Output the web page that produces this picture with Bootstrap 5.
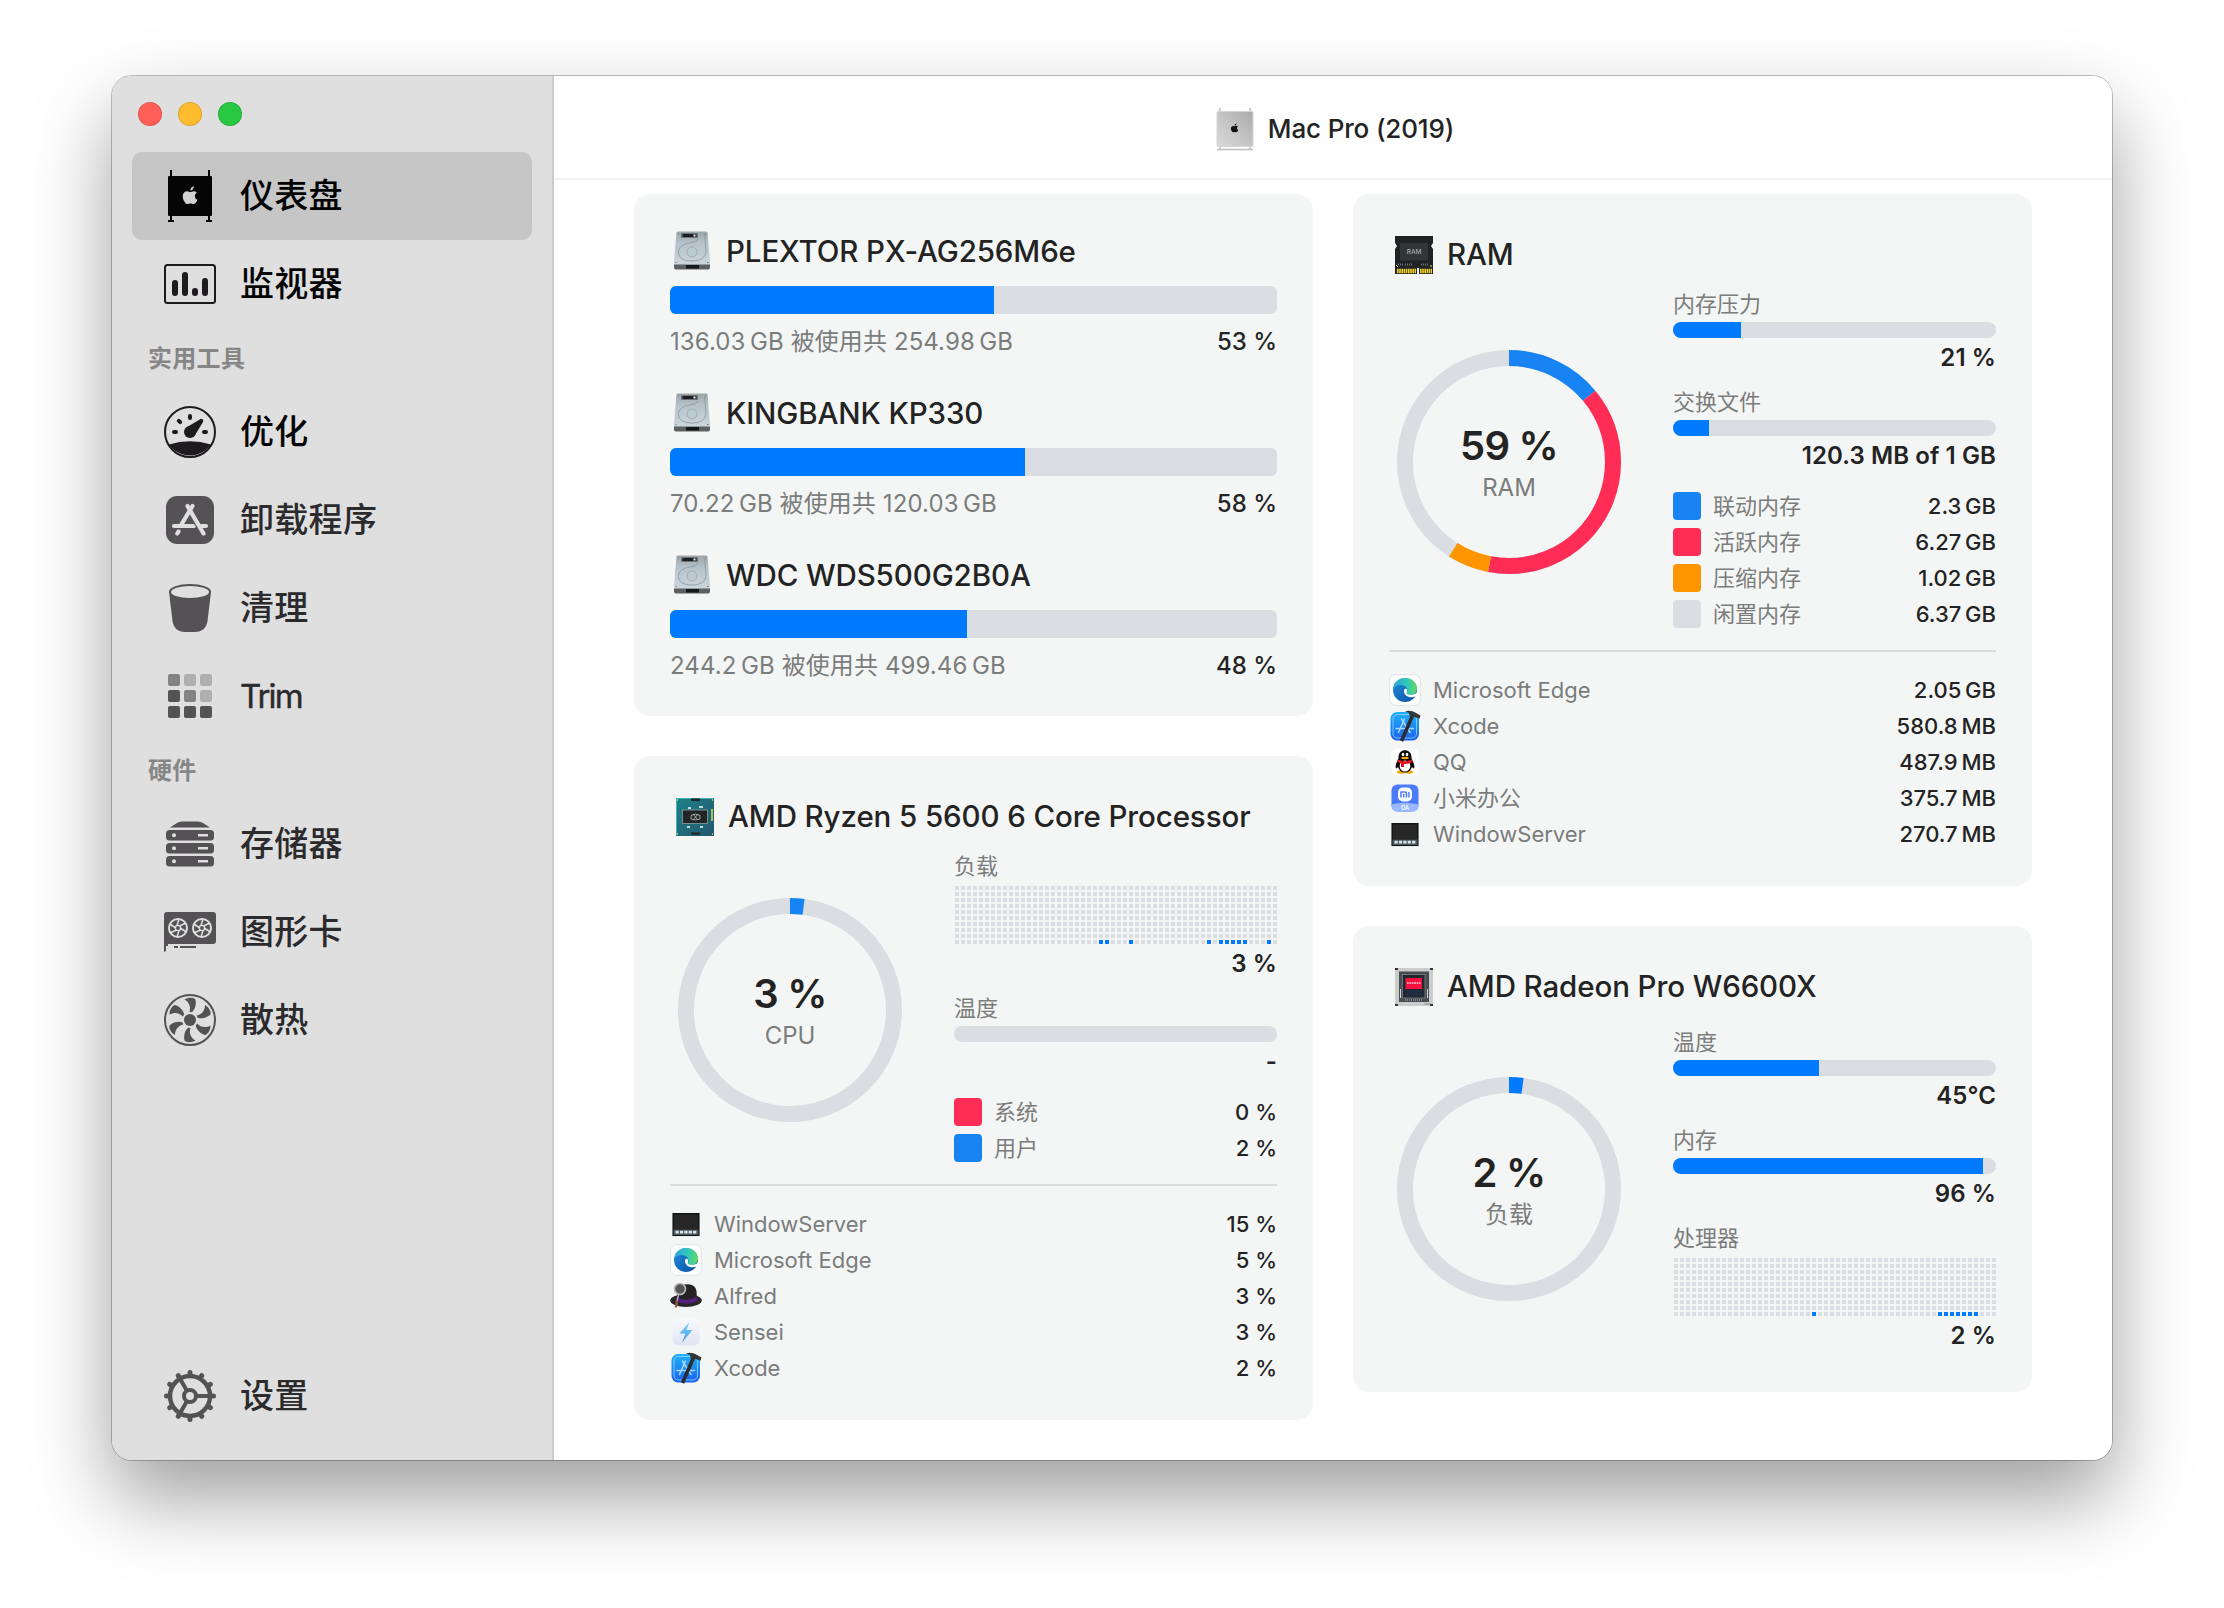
<!DOCTYPE html>
<html lang="zh-CN">
<head>
<meta charset="utf-8">
<title>Mac Pro (2019)</title>
<link href="https://cdn.jsdelivr.net/npm/bootstrap@5.3.0/dist/css/bootstrap.min.css" rel="stylesheet">
<style>
body{font-family:Inter,"Noto Sans CJK SC",sans-serif;width:2224px;height:1608px;overflow:hidden;color:#232323;padding:76px 112px 0}
.win{width:2000px;height:1384px;border-radius:20px;box-shadow:0 0 0 1px rgba(0,0,0,.24),0 38px 80px rgba(0,0,0,.38)}
.side{width:442px;background:#dfdfdf;border-right:2px solid #cbcbcb;padding:26px 20px 20px}
.lights{height:50px;padding-left:6px;gap:16px}
.dot{width:24px;height:24px;border-radius:50%;border:1px solid rgba(0,0,0,.12)}
.dot.close-dot{background:#ff5f57}
.dot.min-dot{background:#febc2e}
.dot.max-dot{background:#28c840}
.side .nav-link{height:88px;padding:0 0 0 32px;gap:24px;font-size:34px;font-weight:500;line-height:1;color:#2b2a2c;border-radius:10px;width:400px;letter-spacing:.3px}
.side .nav-link.dark{color:#050505}
.side .nav-link.active{background:#c6c6c6;color:#000}
.side .nav-link svg{width:52px;height:52px;flex:none;color:#545255}
.side .dark svg{color:#1d1b1e}
.side .latin{font-size:33px;font-weight:400;letter-spacing:-1.9px;-webkit-text-stroke:.4px}
.nav-label{height:60px;padding:2px 0 0 16px;font-size:24px;font-weight:700;color:#868686;letter-spacing:.3px}
.topbar{height:104px;border-bottom:2px solid #f2f2f2;background:#fefefe;font-size:26px;font-weight:500;gap:14px;padding:3px 0 0 4px;letter-spacing:-.15px}
.board{padding:14px 80px 0;gap:40px}
.stack{width:679px;gap:40px}
.tile{background:#f4f6f5;border:0;border-radius:16px;padding:41px 36px 0;color:#232323}
.tile .ttl{height:40px;padding-left:6px;font-size:29.5px;font-weight:500;gap:14px;white-space:nowrap;letter-spacing:-.1px;line-height:38px}
.tile .ttl svg{width:38px;height:40px;flex:none}
.tile .ttl span{margin-top:-2px}
.progress{--bs-progress-height:16px;--bs-progress-bg:#dadde2;--bs-progress-bar-bg:#007aff;border-radius:8px}
.tile-drives{height:522px;padding-top:37px}
.tile-cpu{height:664px}
.tile-ram{height:692px}
.tile-gpu{height:466px}
.drive{height:162px}
.drive:first-child{height:163px}
.drive .ttl{padding-left:3px;gap:15px}
.drive .ttl span{margin-top:0}
.drive .progress{height:28px;border-radius:6px;margin-top:15px}
.drive .info{margin-top:14px;height:28px;font-size:24px}
.drive .info .mute{letter-spacing:.1px}
.mute{color:#7b7c7c}
.drive .info .val{font-weight:500;font-size:24px}
.gauges{margin-top:15px}
.tile-gpu .gauges{margin-top:21px}
.ring{width:224px;height:224px;margin:46px 0 0 8px;flex:none}
.tile-ram .ring{margin-top:60px}
.tile-gpu .ring{margin-top:49px}
.ring svg{width:224px;height:224px}
.ring .inner{padding:3px 0 0}
.ring .num{font-size:40px;font-weight:600;line-height:48px;letter-spacing:-.8px}
.ring .cap{font-size:24px;line-height:36px}
.metrics{width:323px}
.metric{height:98px}
.metric.tall{height:142px}
.metric .lab{height:28px;line-height:28px;font-size:22px}
.metric .progress{margin-top:4px}
.metric .dots{display:block;margin-top:6px;width:323px;height:58px}
.metric .val{margin-top:6px;height:28px;line-height:28px;font-size:24px;font-weight:600;text-align:right;letter-spacing:.1px}
.keys{padding-top:6px}
.key{height:28px;margin-bottom:8px;font-size:22px}
.key:last-child{margin-bottom:0}
.key .sw{width:28px;height:28px;border-radius:4px;margin-right:12px}
.sw-blue{background:#1884f3}
.sw-red{background:#ff2d55}
.sw-orange{background:#ff9500}
.sw-grey{background:#dadde2}
.key .val,.proc .val{font-weight:500;font-size:22px}
.rule{height:2px;background:#dadddc;margin:22px 0 20px}
.proc{height:36px;font-size:22px}
.proc svg{width:32px;height:32px;margin-right:12px;overflow:visible}
</style>
<script src="https://cdn.jsdelivr.net/npm/bootstrap@5.3.0/dist/js/bootstrap.bundle.min.js"></script>
</head>
<body class="bg-white">
<svg width="0" height="0" class="position-absolute">
<defs>
<linearGradient id="gHdd" x2="0" y2="1"><stop stop-color="#9ba4a9"/><stop offset=".35" stop-color="#b6c2c9"/><stop offset="1" stop-color="#cbd6dc"/></linearGradient>
<linearGradient id="gMac" x1="1" x2="0" y2="1"><stop stop-color="#a9a9a9"/><stop offset=".5" stop-color="#c4c4c4"/><stop offset="1" stop-color="#d9d9d9"/></linearGradient>
<linearGradient id="gE1" x2="1"><stop stop-color="#2aa7e0"/><stop offset=".6" stop-color="#35c8b5"/><stop offset="1" stop-color="#62dc5e"/></linearGradient>
<linearGradient id="gE2" x2="1" y2="1"><stop stop-color="#1f8fdd"/><stop offset="1" stop-color="#0c4fa0"/></linearGradient>
<linearGradient id="gX" x2="0" y2="1"><stop stop-color="#1fb2f8"/><stop offset="1" stop-color="#1a62ee"/></linearGradient>
<linearGradient id="gS" x2="0" y2="1"><stop stop-color="#f8f9fe"/><stop offset="1" stop-color="#e0e3f3"/></linearGradient>
<linearGradient id="gB" x2="0" y2="1"><stop stop-color="#7ed8f6"/><stop offset="1" stop-color="#3e95ee"/></linearGradient>
<linearGradient id="gCpu" x2="1" y2="1"><stop stop-color="#1d8189"/><stop offset="1" stop-color="#24566c"/></linearGradient>
<pattern id="cells" width="6" height="6" patternUnits="userSpaceOnUse" x="1"><rect width="4" height="4" fill="#dadde2"/></pattern>
<path id="blade" d="M-5.500-20.500C-1.500-23 4-22.500 5.500-20.500C6.800-14.500 4.200-9.500 1.800-7.800L-.5-8C1.200-13-1-18-5.500-20.500Z"/>
<path id="fruit" d="M14.800 7.200c-1.300.8-2 2-1.900 3.500.1 1.700 1 2.900 2.500 3.500-.8 2.300-2.300 4.400-3.900 4.400-1.100 0-1.600-.7-3-.7s-2 .7-3 .7C3.400 18.600.8 14.500.8 11c0-3.400 2.200-5.200 4.400-5.200 1.300 0 2.300.8 3.200.8.900 0 2.100-.9 3.700-.9 1.100 0 2.100.6 2.700 1.500zM8.300 5.300C8.200 3.200 9.900 1.100 11.800.8c.2 2.200-1.500 4.400-3.500 4.500z"/>
<symbol id="i-mac" viewBox="0 0 52 52"><path d="M6 0h2v6h-2zM44 0h2v6h-2zM6 46h2v4h2v2H4v-2h2zM44 46h2v4h2v2h-6v-2h2z"/><rect x="4" y="6" width="44" height="40" rx="1" fill="#050505"/><use href="#fruit" x="18" y="15.500" fill="#d2d2d2"/></symbol>
<symbol id="i-mon" viewBox="0 0 52 52"><rect x="1" y="7" width="50" height="38" rx="2.500" fill="none" stroke="currentColor" stroke-width="2"/><path fill="none" stroke="currentColor" stroke-width="6" stroke-linecap="round" d="M11 25v10M21 17v18M31 33v2M41 23v12"/></symbol>
<symbol id="i-opt" viewBox="0 0 52 52"><circle cx="26" cy="26" r="25" fill="none" stroke="currentColor" stroke-width="2"/><path fill="currentColor" d="M5 38.500Q26 32 47 38.500A25.500 25.500 0 0 1 5 38.500zM21.500 22L37 12.800Q40 13 39 16L30.500 30z"/><circle cx="26" cy="26" r="6" fill="currentColor"/><path fill="none" stroke="currentColor" stroke-width="4" stroke-linecap="round" d="M26 10v2M10 26h2M40 26h2M14.800 14.800l1.400 1.400"/></symbol>
<symbol id="i-app" viewBox="0 0 52 52"><rect x="2" y="2" width="48" height="48" rx="11" fill="currentColor"/><path fill="none" stroke="#dfdfdf" stroke-width="4.200" stroke-linecap="round" d="M28.500 12L16.500 32M23.500 12L39.500 39.500M10 32h20M37 32h5M14.500 37.500l-1.200 2"/><path d="M26.500 23.500l5.500 9" stroke="#545255" stroke-width="1"/></symbol>
<symbol id="i-bin" viewBox="0 0 52 52"><path fill="currentColor" d="M5 10C5 1.500 47 1.500 47 10L43.500 39C42.500 46 38 50 31 50H21C14 50 9.500 46 8.500 39z"/><path fill="currentColor" d="M5 10a21 8 0 0 1 42 0z"/><ellipse cx="26" cy="10" rx="19" ry="6" fill="#dfdfdf"/></symbol>
<symbol id="i-trim" viewBox="0 0 52 52"><g fill="#828183"><rect x="4" y="4" width="12" height="12" rx="2"/><rect x="20" y="20" width="12" height="12" rx="2"/></g><g fill="#b0aeb1"><rect x="20" y="4" width="12" height="12" rx="2"/><rect x="36" y="4" width="12" height="12" rx="2"/><rect x="36" y="20" width="12" height="12" rx="2"/></g><g fill="#545255"><rect x="4" y="20" width="12" height="12" rx="2"/><rect x="4" y="36" width="12" height="12" rx="2"/><rect x="20" y="36" width="12" height="12" rx="2"/><rect x="36" y="36" width="12" height="12" rx="2"/></g></symbol>
<symbol id="i-sto" viewBox="0 0 52 52"><path fill="currentColor" d="M6 9.500L13 5Q15 3.500 18 3.500H34Q37 3.500 39 5L46 9.500z"/><g fill="currentColor"><rect x="2" y="12" width="48" height="10.500" rx="3.500"/><rect x="2" y="25" width="48" height="10.500" rx="3.500"/><rect x="2" y="38" width="48" height="10.500" rx="3.500"/></g><g fill="#dfdfdf"><circle cx="10" cy="17.200" r="2"/><circle cx="10" cy="30.200" r="2"/><circle cx="10" cy="43.200" r="2"/><path d="M34 16h10v2.600H34zM34 29h10v2.600H34zM34 42h10v2.600H34z"/></g></symbol>
<symbol id="i-fan" viewBox="-26 -26 52 52"><circle r="25" fill="none" stroke="currentColor" stroke-width="2"/><circle r="6" fill="currentColor"/><g fill="currentColor"><use href="#blade"/><use href="#blade" transform="rotate(60)"/><use href="#blade" transform="rotate(120)"/><use href="#blade" transform="rotate(180)"/><use href="#blade" transform="rotate(240)"/><use href="#blade" transform="rotate(300)"/></g></symbol>
<symbol id="i-rot" viewBox="-10 -10 20 20"><circle r="9" fill="none" stroke="#dfdfdf" stroke-width="2"/><circle r="2.600" fill="none" stroke="#dfdfdf" stroke-width="1.400"/><path fill="none" stroke="#dfdfdf" stroke-width="1.500" d="M-1-2.500L1-9M2-2.200L8-5M2.800.5L8.500 4M1 2.500L-1 9M-2 2.200L-8 5M-2.800-.5L-8.500-4"/></symbol>
<symbol id="i-gpu" viewBox="0 0 52 52"><path fill="currentColor" d="M0 9Q0 6 3 6H49Q52 6 52 9V35Q52 38 49 38H4V40H2V45L0 46zM10 40h4v2h-4zM16 40h16v2H16z"/><use href="#i-rot" x="4" y="12" width="20" height="20"/><use href="#i-rot" x="28" y="12" width="20" height="20"/></symbol>
<symbol id="i-set" viewBox="-26 -26 52 52"><circle r="20" fill="none" stroke="currentColor" stroke-width="4.500"/><circle r="6" fill="none" stroke="currentColor" stroke-width="4"/><path stroke="currentColor" stroke-width="4" d="M7 0H20M-3.500-6L-10-17.300M-3.500 6L-10 17.300"/><path stroke="currentColor" stroke-width="5" stroke-linecap="round" d="M0-23.500V-21M0 23.500V21M-23.500 0H-21M23.500 0H21M11.700-20.300L10.500-18.200M20.300-11.700L18.200-10.500M20.300 11.700L18.200 10.500M11.700 20.300L10.500 18.200M-11.700 20.300L-10.500 18.200M-20.300 11.700L-18.200 10.500M-20.300-11.700L-18.200-10.500M-11.700-20.300L-10.500-18.200"/></symbol>
<symbol id="i-pro" viewBox="0 0 38 44"><path fill="none" stroke="#bdbdbd" stroke-width="1.500" d="M4 1v4M34 1v4M4 38v4M34 38v4M1 42.500h36"/><rect x="1" y="4.500" width="36" height="35" rx="1.500" fill="url(#gMac)" stroke="#d5d5d5"/><use href="#fruit" transform="translate(14.500 16) scale(.5)" fill="#111"/></symbol>
<symbol id="i-hdd" viewBox="0 0 38 40"><path d="M1 33h36v3.500q0 2-2 2H3q-2 0-2-2z" fill="#5a6064"/><path d="M13 34h13v3.500H13z" fill="#15181a"/><path d="M3.500 1.500Q3.600.5 5 .5H33q1.400 0 1.500 1L37 30v3.500H1V30z" fill="url(#gHdd)"/><path d="M8 2h17v5H8z" fill="#6d757a"/><path d="M9.500 3h14v3h-14z" fill="#1d2022"/><path d="M20.500 3.500h2v2h-2z" fill="#eee"/><path d="M25 8q-1 3-8 4c-7 1-11.500 4-11.500 9.500S11 30 19 30c9 0 14-4 14-10l-1.500-17" fill="none" stroke="#8b989f" stroke-width=".9"/><circle cx="19" cy="21" r="5" fill="#bccad1" stroke="#98a5ad" stroke-width=".8"/><path d="M2.500 31.500h1M34 31.500h1.500M5 3h1M32 3h1" stroke="#6b767c"/></symbol>
<symbol id="i-cpu" viewBox="0 0 38 40"><rect y="1" width="38" height="38" fill="url(#gCpu)"/><path d="M.5 38.500V1.500H37.500" fill="none" stroke="#3fb3b5"/><path d="M15 1.500h9v2.500h-9zM15 35.500h9v2h-9z" fill="#1a2429"/><rect x="6.500" y="13" width="25" height="13.500" fill="#222527" stroke="#8fa1a3" stroke-width=".8"/><path d="M15 18.500q4-3 9 0v3.500q-5 2-9 0zM17 17l4.500 5.500M22 17l-4.500 5.500" fill="none" stroke="#b8c3c4" stroke-width=".8"/><path d="M12 10h3v2h-3zM23 9h4v2h-4zM11 29h3v2h-3zM24 29h3v2h-3z" fill="#bdd7d6"/><path d="M36 12v12M1 3h1M36 3h1M1 37h1M36 37h1" stroke="#d7e04a" stroke-width="1.500"/></symbol>
<symbol id="i-ram" viewBox="0 0 38 40"><path d="M0 1h38v7l-2 3 2 3v25H24v-6h-2v6H0V14l2-3-2-3z" fill="#202224"/><rect x="5" y="8" width="28" height="17.500" fill="#333638"/><text x="19" y="19" text-anchor="middle" font-size="6.500" font-family="Inter" fill="#a7a7a7">RAM</text><path d="M3 29.500h5M10 29.500h7M26 29.500h7" stroke="#777" stroke-dasharray="1 1" stroke-width="2"/><path d="M2 36h19M25 36h12" stroke="#f3d32b" stroke-width="4.500" stroke-dasharray="1.600 .6"/><path d="M1 30l2 2M35 31h2" stroke="#eadb9a"/></symbol>
<symbol id="i-chip" viewBox="0 0 38 40"><rect y="1" width="38" height="38" rx="1" fill="#cbcccc"/><path d="M0 1h3v2H0zM35 1h3v2h-3zM0 37h3v2H0zM35 37h3v2h-3z" fill="#333"/><rect x="4" y="4.500" width="30" height="30.500" fill="#484d51"/><rect x="7.500" y="7.500" width="22.500" height="23.500" fill="#22272d" stroke="#7b868d" stroke-width=".8"/><rect x="10.500" y="11" width="16.500" height="11" fill="#f5103e"/><path d="M12 16h13.500" stroke="#ffc7d1" stroke-width="1.500" stroke-dasharray="1.800 .6"/><rect x="10.500" y="23" width="16.500" height="6" fill="#202c40"/><path d="M10 33h18" stroke="#bbb" stroke-dasharray="1 1"/><path d="M5.500 22v9M32.500 22v9" stroke="#d5d5d5"/><path d="M29 37h7" stroke="#888"/></symbol>
<symbol id="a-win" viewBox="0 0 32 32"><rect x="2" y="5" width="28" height="23.500" fill="#c9e2e6"/><rect x="2.500" y="5" width="27" height="23" fill="#151515"/><rect x="4" y="6.500" width="24" height="14.500" fill="#272727"/><rect x="3.500" y="21.500" width="25" height="5.500" fill="#4d565c"/><path d="M5.500 24.200h21.500" stroke="#d3e7f2" stroke-width="2.800" stroke-dasharray="3.200 1.200"/></symbol>
<symbol id="a-edge" viewBox="0 0 32 32"><rect x=".7" y=".7" width="30.600" height="30.600" rx="6" fill="#fff" stroke="#e2e3e3"/><circle cx="16" cy="16" r="12" fill="url(#gE2)"/><path d="M4.200 15C5 8 10 4 16 4c7 0 12 5 12 10.500 0 4.500-3.500 6.500-7 6.500-2.500 0-3.500-1-3-2 1-2.500.5-5.500-3-7.300C11 10 6.500 11.500 4.200 15z" fill="url(#gE1)"/><path d="M16 14.500c-1.500 1.800-1.300 5 1 7 2.800 2.300 6.500 2.200 9.500.8l2.500-1.500-1-2.500c-2 2.700-7 3.200-9.500 2C17 19.500 18.500 17.500 18 15.500z" fill="#fff"/></symbol>
<symbol id="a-alf" viewBox="0 0 32 32"><ellipse cx="16" cy="20.500" rx="15.800" ry="6.500" fill="#29262a"/><path d="M7 20V9Q9 3.500 15 4.500Q25 3 26.500 11L27 20Q17 26 7 20z" fill="#252325"/><path d="M6.500 17q10 6 20.500-.5l.5 4Q17 26.500 6 21z" fill="#552080"/><circle cx="10" cy="9" r="5.500" fill="#555" stroke="#b9b9b9" stroke-width="1.600"/><path d="M8.500 15L7 21" stroke="#aaa" stroke-width="1.500"/><path d="M7 20.500L5.800 27.500" stroke="#9a5a32" stroke-width="2.200"/></symbol>
<symbol id="a-sen" viewBox="0 0 32 32"><rect x="2.500" y="2.500" width="27" height="27" rx="6" fill="url(#gS)"/><path d="M19.500 6L9.500 17.500h6L12 26.500l10.500-12.500h-6z" fill="url(#gB)"/></symbol>
<symbol id="a-xc" viewBox="0 0 32 32"><rect x="1.500" y="2" width="28.500" height="28.500" rx="6.500" fill="url(#gX)"/><rect x="4" y="4.500" width="23.500" height="23.500" rx="4.500" fill="none" stroke="#9bd4fb" stroke-width=".8"/><path d="M15.500 9L9.500 22.500M12.500 9l8.500 13.500M7 18.500h17.500" fill="none" stroke="#a9d8ff" stroke-width="1.500" stroke-linecap="round"/><path d="M24 4.500L12.500 31" stroke="#2a2c30" stroke-width="3.600"/><path d="M16 1.200Q22-.5 27 3L31.500 5.500l-1 3.200-4-1.500L20.500 6 20 3z" fill="#33363a"/></symbol>
<symbol id="a-qq" viewBox="0 0 32 32"><rect x="2.500" y="2.500" width="27" height="27" rx="6" fill="#fff"/><ellipse cx="12" cy="26" rx="4" ry="1.800" fill="#f6a800"/><ellipse cx="20" cy="26" rx="4" ry="1.800" fill="#f6a800"/><path d="M9.500 12C9 1.500 23 1.500 22.500 12L25 18q1 4-.5 4.500L23 21q-2 5.500-7 5.500T9 21l-1.500 1.500Q6 22 7 18z" fill="#0b0b0b"/><ellipse cx="16" cy="20" rx="5.300" ry="5.500" fill="#fff"/><path d="M9 13.500q7 3.500 14 0l.5 2.500q-4 2.500-8.500 2v3h-3v-3.500l-3.500-1.500z" fill="#e2151f"/><ellipse cx="14" cy="8.500" rx="1.300" ry="1.800" fill="#fff"/><ellipse cx="18" cy="8.500" rx="1.300" ry="1.800" fill="#fff"/><ellipse cx="16" cy="12" rx="3.800" ry="1.200" fill="#f6a800"/></symbol>
<symbol id="a-mi" viewBox="0 0 32 32"><rect x="2.500" y="2.500" width="27" height="27" rx="6" fill="#4a7bfb"/><path d="M2.500 22.500q13.500-3.500 27 0v1q0 6-6 6h-15q-6 0-6-6z" fill="#9bb7fd"/><rect x="9" y="5.500" width="14" height="14" rx="5" fill="#fff"/><path d="M12 15.500v-5.500h4q1.500 0 1.500 1.500v4M14.800 12v3.500M20 10v5.500" fill="none" stroke="#4a7bfb" stroke-width="1.500"/><text x="16" y="27.800" font-family="Inter" font-weight="600" font-size="5.500" text-anchor="middle" fill="#fff">OA</text></symbol>
</defs>
</svg>

<div class="win d-flex overflow-hidden bg-white">
  <nav class="side d-flex flex-column flex-shrink-0">
    <div class="lights d-flex align-items-start"><span class="dot close-dot"></span><span class="dot min-dot"></span><span class="dot max-dot"></span></div>
    <div class="nav flex-column flex-nowrap flex-grow-1">
      <a class="nav-link dark active d-flex align-items-center"><svg><use href="#i-mac"/></svg><span>仪表盘</span></a>
      <a class="nav-link dark d-flex align-items-center"><svg><use href="#i-mon"/></svg><span>监视器</span></a>
      <div class="nav-label d-flex align-items-center">实用工具</div>
      <a class="nav-link dark d-flex align-items-center"><svg><use href="#i-opt"/></svg><span>优化</span></a>
      <a class="nav-link d-flex align-items-center"><svg><use href="#i-app"/></svg><span>卸载程序</span></a>
      <a class="nav-link d-flex align-items-center"><svg><use href="#i-bin"/></svg><span>清理</span></a>
      <a class="nav-link d-flex align-items-center"><svg><use href="#i-trim"/></svg><span class="latin">Trim</span></a>
      <div class="nav-label d-flex align-items-center">硬件</div>
      <a class="nav-link d-flex align-items-center"><svg><use href="#i-sto"/></svg><span>存储器</span></a>
      <a class="nav-link d-flex align-items-center"><svg><use href="#i-gpu"/></svg><span>图形卡</span></a>
      <a class="nav-link d-flex align-items-center"><svg><use href="#i-fan"/></svg><span>散热</span></a>
      <a class="nav-link d-flex align-items-center mt-auto"><svg><use href="#i-set"/></svg><span>设置</span></a>
    </div>
  </nav>
  <main class="flex-grow-1 bg-white">
    <header class="topbar d-flex align-items-center justify-content-center"><svg width="38" height="44"><use href="#i-pro"/></svg><span>Mac Pro (2019)</span></header>
    <div class="board d-flex justify-content-center">
      <div class="stack d-flex flex-column">
        <section class="tile card tile-drives">
          <div class="drive"><div class="ttl d-flex align-items-center"><svg><use href="#i-hdd"/></svg><span>PLEXTOR PX-AG256M6e</span></div><div class="progress"><div class="progress-bar" style="width:53.4%"></div></div><div class="info d-flex justify-content-between align-items-center"><span class="mute">136.03&#8201;GB 被使用共 254.98&#8201;GB</span><span class="val">53 %</span></div></div>
          <div class="drive"><div class="ttl d-flex align-items-center"><svg><use href="#i-hdd"/></svg><span>KINGBANK KP330</span></div><div class="progress"><div class="progress-bar" style="width:58.5%"></div></div><div class="info d-flex justify-content-between align-items-center"><span class="mute">70.22&#8201;GB 被使用共 120.03&#8201;GB</span><span class="val">58 %</span></div></div>
          <div class="drive"><div class="ttl d-flex align-items-center"><svg><use href="#i-hdd"/></svg><span>WDC WDS500G2B0A</span></div><div class="progress"><div class="progress-bar" style="width:48.9%"></div></div><div class="info d-flex justify-content-between align-items-center"><span class="mute">244.2&#8201;GB 被使用共 499.46&#8201;GB</span><span class="val">48 %</span></div></div>
        </section>
        <section class="tile card tile-cpu">
          <div class="ttl d-flex align-items-center"><svg><use href="#i-cpu"/></svg><span>AMD Ryzen 5 5600 6 Core Processor</span></div>
          <div class="gauges d-flex justify-content-between align-items-start">
            <div class="ring position-relative"><svg viewBox="0 0 224 224"><g transform="rotate(-90 112 112)" fill="none" stroke-width="16"><circle cx="112" cy="112" r="104" stroke="#dadde2"/><circle cx="112" cy="112" r="104" stroke="#1884f3" pathLength="100" stroke-dasharray="2.100 97.900"/></g></svg><div class="inner position-absolute top-0 start-0 w-100 h-100 d-flex flex-column align-items-center justify-content-center"><span class="num">3 %</span><span class="cap mute">CPU</span></div></div>
            <div class="metrics">
              <div class="metric tall"><div class="lab mute">负载</div><svg class="dots" viewBox="0 0 323 58"><rect width="323" height="58" fill="url(#cells)"/><path fill="#007aff" d="M145 54h4v4h-4zM151 54h4v4h-4zM175 54h4v4h-4zM253 54h4v4h-4zM265 54h4v4h-4zM271 54h4v4h-4zM277 54h4v4h-4zM283 54h4v4h-4zM289 54h4v4h-4zM313 54h4v4h-4z"/></svg><div class="val">3 %</div></div>
              <div class="metric"><div class="lab mute">温度</div><div class="progress"></div><div class="val">-</div></div>
              <div class="keys">
                <div class="key d-flex align-items-center"><i class="sw sw-red"></i><span class="mute">系统</span><span class="val ms-auto">0 %</span></div>
                <div class="key d-flex align-items-center"><i class="sw sw-blue"></i><span class="mute">用户</span><span class="val ms-auto">2 %</span></div>
              </div>
            </div>
          </div>
          <div class="rule"></div>
          <div class="proc d-flex align-items-center"><svg><use href="#a-win"/></svg><span class="mute">WindowServer</span><span class="val ms-auto">15 %</span></div>
          <div class="proc d-flex align-items-center"><svg><use href="#a-edge"/></svg><span class="mute">Microsoft Edge</span><span class="val ms-auto">5 %</span></div>
          <div class="proc d-flex align-items-center"><svg><use href="#a-alf"/></svg><span class="mute">Alfred</span><span class="val ms-auto">3 %</span></div>
          <div class="proc d-flex align-items-center"><svg><use href="#a-sen"/></svg><span class="mute">Sensei</span><span class="val ms-auto">3 %</span></div>
          <div class="proc d-flex align-items-center"><svg><use href="#a-xc"/></svg><span class="mute">Xcode</span><span class="val ms-auto">2 %</span></div>
        </section>
      </div>
      <div class="stack d-flex flex-column">
        <section class="tile card tile-ram">
          <div class="ttl d-flex align-items-center"><svg><use href="#i-ram"/></svg><span>RAM</span></div>
          <div class="gauges d-flex justify-content-between align-items-start">
            <div class="ring position-relative"><svg viewBox="0 0 224 224"><g transform="rotate(-90 112 112)" fill="none" stroke-width="16"><circle cx="112" cy="112" r="104" stroke="#dadde2"/><circle cx="112" cy="112" r="104" stroke="#1884f3" pathLength="100" stroke-dasharray="14 86"/><circle cx="112" cy="112" r="104" stroke="#ff2d55" pathLength="100" stroke-dasharray="39 61" stroke-dashoffset="-14"/><circle cx="112" cy="112" r="104" stroke="#ff9500" pathLength="100" stroke-dasharray="6 94" stroke-dashoffset="-53"/></g></svg><div class="inner position-absolute top-0 start-0 w-100 h-100 d-flex flex-column align-items-center justify-content-center"><span class="num">59 %</span><span class="cap mute">RAM</span></div></div>
            <div class="metrics">
              <div class="metric"><div class="lab mute">内存压力</div><div class="progress"><div class="progress-bar" style="width:21%"></div></div><div class="val">21 %</div></div>
              <div class="metric"><div class="lab mute">交换文件</div><div class="progress"><div class="progress-bar" style="width:11.1%"></div></div><div class="val">120.3 MB of 1 GB</div></div>
              <div class="keys">
                <div class="key d-flex align-items-center"><i class="sw sw-blue"></i><span class="mute">联动内存</span><span class="val ms-auto">2.3&#8201;GB</span></div>
                <div class="key d-flex align-items-center"><i class="sw sw-red"></i><span class="mute">活跃内存</span><span class="val ms-auto">6.27&#8201;GB</span></div>
                <div class="key d-flex align-items-center"><i class="sw sw-orange"></i><span class="mute">压缩内存</span><span class="val ms-auto">1.02&#8201;GB</span></div>
                <div class="key d-flex align-items-center"><i class="sw sw-grey"></i><span class="mute">闲置内存</span><span class="val ms-auto">6.37&#8201;GB</span></div>
              </div>
            </div>
          </div>
          <div class="rule"></div>
          <div class="proc d-flex align-items-center"><svg><use href="#a-edge"/></svg><span class="mute">Microsoft Edge</span><span class="val ms-auto">2.05&#8201;GB</span></div>
          <div class="proc d-flex align-items-center"><svg><use href="#a-xc"/></svg><span class="mute">Xcode</span><span class="val ms-auto">580.8&#8201;MB</span></div>
          <div class="proc d-flex align-items-center"><svg><use href="#a-qq"/></svg><span class="mute">QQ</span><span class="val ms-auto">487.9&#8201;MB</span></div>
          <div class="proc d-flex align-items-center"><svg><use href="#a-mi"/></svg><span class="mute">小米办公</span><span class="val ms-auto">375.7&#8201;MB</span></div>
          <div class="proc d-flex align-items-center"><svg><use href="#a-win"/></svg><span class="mute">WindowServer</span><span class="val ms-auto">270.7&#8201;MB</span></div>
        </section>
        <section class="tile card tile-gpu">
          <div class="ttl d-flex align-items-center"><svg><use href="#i-chip"/></svg><span>AMD Radeon Pro W6600X</span></div>
          <div class="gauges d-flex justify-content-between align-items-start">
            <div class="ring position-relative"><svg viewBox="0 0 224 224"><g transform="rotate(-90 112 112)" fill="none" stroke-width="16"><circle cx="112" cy="112" r="104" stroke="#dadde2"/><circle cx="112" cy="112" r="104" stroke="#007aff" pathLength="100" stroke-dasharray="2.100 97.900"/></g></svg><div class="inner position-absolute top-0 start-0 w-100 h-100 d-flex flex-column align-items-center justify-content-center"><span class="num">2 %</span><span class="cap mute">负载</span></div></div>
            <div class="metrics">
              <div class="metric"><div class="lab mute">温度</div><div class="progress"><div class="progress-bar" style="width:45.1%"></div></div><div class="val">45°C</div></div>
              <div class="metric"><div class="lab mute">内存</div><div class="progress"><div class="progress-bar" style="width:96%"></div></div><div class="val">96 %</div></div>
              <div class="metric tall"><div class="lab mute">处理器</div><svg class="dots" viewBox="0 0 323 58"><rect width="323" height="58" fill="url(#cells)"/><path fill="#007aff" d="M139 54h4v4h-4zM265 54h4v4h-4zM271 54h4v4h-4zM277 54h4v4h-4zM283 54h4v4h-4zM289 54h4v4h-4zM295 54h4v4h-4zM301 54h4v4h-4z"/></svg><div class="val">2 %</div></div>
            </div>
          </div>
        </section>
      </div>
    </div>
  </main>
</div>
</body>
</html>
